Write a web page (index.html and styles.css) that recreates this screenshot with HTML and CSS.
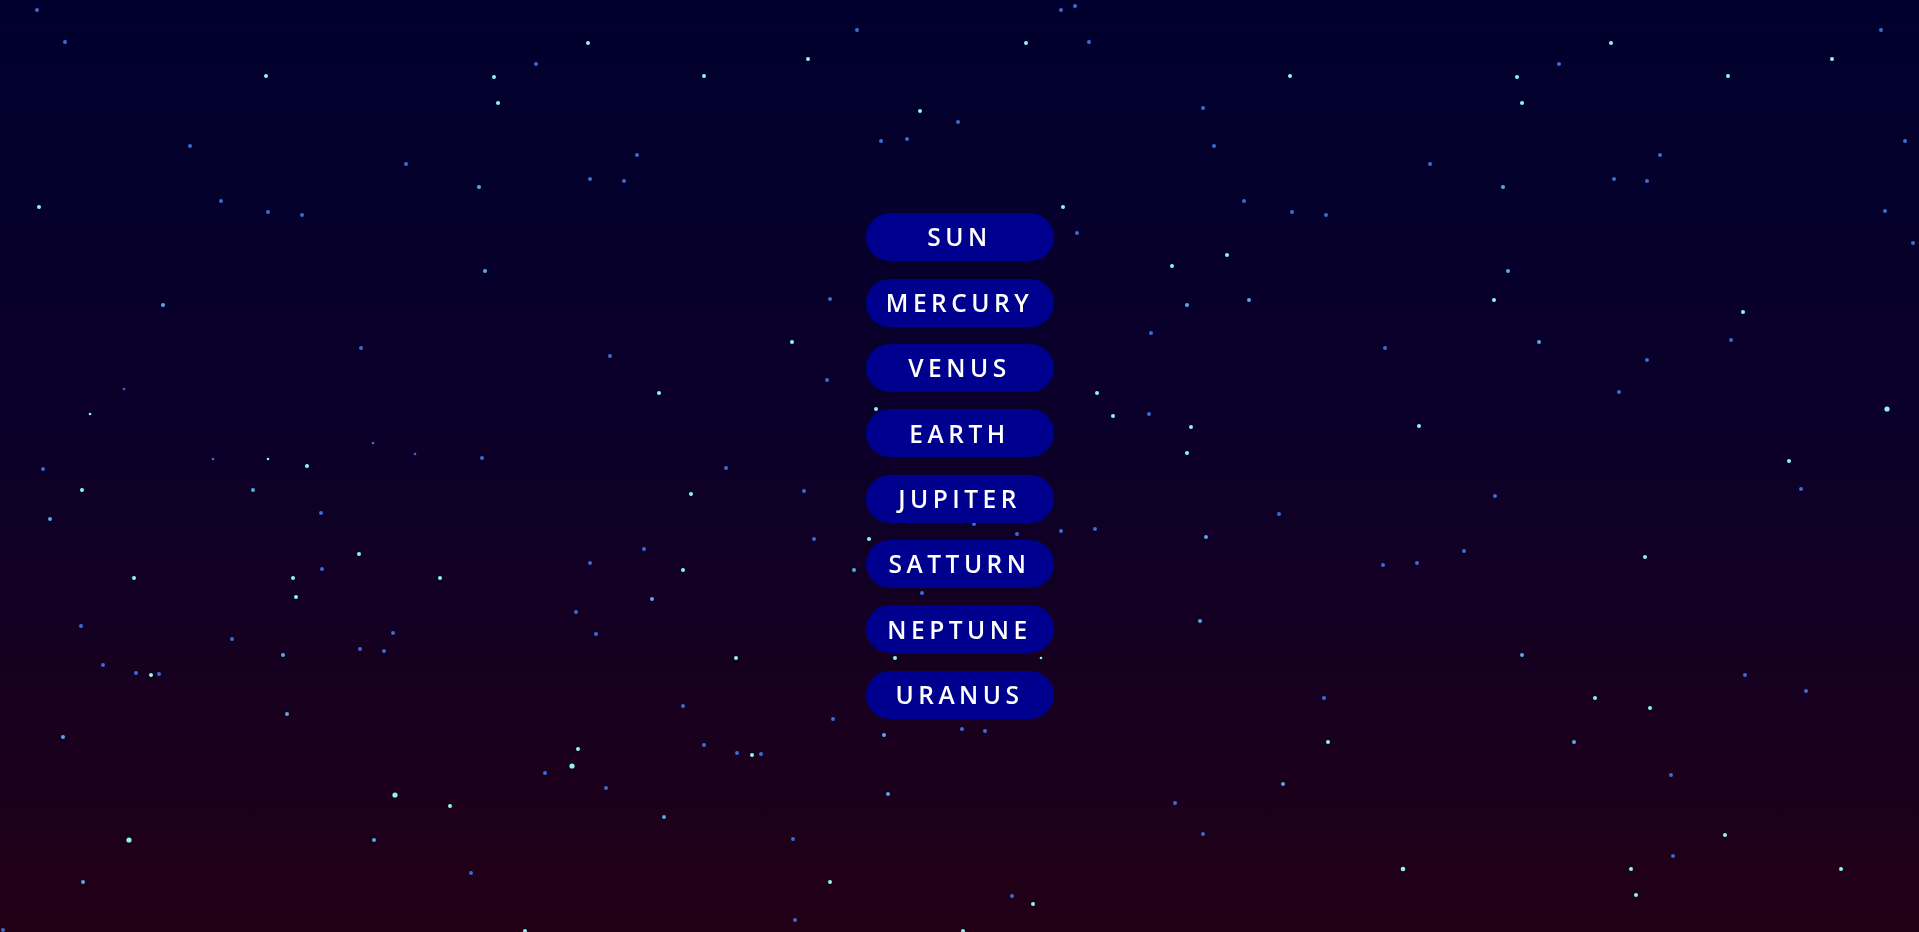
FILE: index.html
```html
<!DOCTYPE html>
<html lang="en">
<head>
<meta charset="utf-8">
<title>Solar System</title>
<link rel="stylesheet" href="styles.css">
</head>
<body>
<div class="sky" aria-hidden="true">
  <span class="stars stars-cyan"></span>
  <span class="stars stars-cyan-big"></span>
  <span class="stars stars-cyan-small"></span>
  <span class="stars stars-light"></span>
  <span class="stars stars-blue"></span>
  <span class="stars stars-blue-small"></span>
</div>
<nav class="menu">
  <a class="planet" href="#">SUN</a>
  <a class="planet" href="#">MERCURY</a>
  <a class="planet" href="#">VENUS</a>
  <a class="planet" href="#">EARTH</a>
  <a class="planet" href="#">JUPITER</a>
  <a class="planet" href="#">SATTURN</a>
  <a class="planet" href="#">NEPTUNE</a>
  <a class="planet" href="#">URANUS</a>
</nav>
</body>
</html>
```
FILE: styles.css
```css
html, body {
  margin: 0;
  padding: 0;
  height: 100%;
}

body {
  min-height: 100vh;
  overflow: hidden;
  background: linear-gradient(to bottom, #00002e 0%, #0b002a 45%, #220016 100%);
  font-family: "Open Sans", "Noto Sans", "DejaVu Sans", sans-serif;
  display: flex;
  align-items: center;
  justify-content: center;
}

.sky {
  position: fixed;
  inset: 0;
  pointer-events: none;
}

.stars {
  position: absolute;
  left: -0.5px;
  top: -0.5px;
  width: 4px;
  height: 4px;
  border-radius: 50%;
}

.stars-cyan {
  box-shadow:
    264px 74px #8cf6ee, 492px 75px #8cf6ee, 496px 101px #8cf6ee, 37px 205px #8cf6ee,
    305px 464px #8cf6ee, 80px 488px #8cf6ee, 357px 552px #8cf6ee, 132px 576px #8cf6ee,
    291px 576px #8cf6ee, 438px 576px #8cf6ee, 294px 595px #8cf6ee, 149px 673px #8cf6ee,
    448px 804px #8cf6ee, 586px 41px #8cf6ee, 702px 74px #8cf6ee, 806px 57px #8cf6ee,
    918px 109px #8cf6ee, 790px 340px #8cf6ee, 657px 391px #8cf6ee, 874px 407px #8cf6ee,
    689px 492px #8cf6ee, 867px 537px #8cf6ee, 681px 568px #8cf6ee, 734px 656px #8cf6ee,
    893px 656px #8cf6ee, 576px 747px #8cf6ee, 750px 753px #8cf6ee, 828px 880px #8cf6ee,
    523px 929px #8cf6ee, 961px 929px #8cf6ee,
    1024px 41px #8cf6ee, 1288px 74px #8cf6ee, 1061px 205px #8cf6ee, 1225px 253px #8cf6ee,
    1170px 264px #8cf6ee, 1095px 391px #8cf6ee, 1111px 414px #8cf6ee, 1189px 425px #8cf6ee,
    1417px 424px #8cf6ee, 1185px 451px #8cf6ee, 1609px 41px #8cf6ee, 1515px 75px #8cf6ee,
    1520px 101px #8cf6ee, 1726px 74px #8cf6ee, 1830px 57px #8cf6ee, 1492px 298px #8cf6ee,
    1741px 310px #8cf6ee, 1787px 459px #8cf6ee, 1326px 740px #8cf6ee,
    1031px 902px #8cf6ee, 1643px 555px #8cf6ee, 1593px 696px #8cf6ee, 1648px 706px #8cf6ee,
    1723px 833px #8cf6ee, 1629px 867px #8cf6ee, 1839px 867px #8cf6ee, 1634px 893px #8cf6ee;
}

.stars-cyan-big {
  box-shadow:
    393px 793px 0 0.6px #8cf6ee, 127px 838px 0 0.6px #8cf6ee, 570px 764px 0 0.6px #8cf6ee,
    1885px 407px 0 0.6px #8cf6ee, 1401px 867px 0 0.3px #8cf6ee;
}

.stars-cyan-small {
  box-shadow:
    88px 412px 0 -0.7px #8cf6ee, 266px 457px 0 -0.7px #8cf6ee, 1039px 656px 0 -0.7px #8cf6ee;
}

.stars-light {
  box-shadow:
    477px 185px #57a8e6, 483px 269px #57a8e6, 161px 303px #57a8e6, 251px 488px #57a8e6,
    48px 517px #57a8e6, 281px 653px #57a8e6, 285px 712px #57a8e6, 61px 735px #57a8e6,
    372px 838px #57a8e6, 81px 880px #57a8e6, 852px 568px #57a8e6, 650px 597px #57a8e6,
    882px 733px #57a8e6, 886px 792px #57a8e6, 662px 815px #57a8e6,
    1185px 303px #57a8e6, 1247px 298px #57a8e6, 1501px 185px #57a8e6, 1506px 269px #57a8e6,
    1537px 340px #57a8e6, 1204px 535px #57a8e6, 1198px 619px #57a8e6, 1281px 782px #57a8e6,
    1520px 653px #57a8e6, 1572px 740px #57a8e6;
}

.stars-blue {
  box-shadow:
    35px 8px #3d6bd2, 63px 40px #3d6bd2, 188px 144px #3d6bd2, 404px 162px #3d6bd2,
    219px 199px #3d6bd2, 266px 210px #3d6bd2, 300px 213px #3d6bd2, 359px 346px #3d6bd2,
    480px 456px #3d6bd2, 41px 467px #3d6bd2, 319px 511px #3d6bd2, 320px 567px #3d6bd2,
    79px 624px #3d6bd2, 391px 631px #3d6bd2, 230px 637px #3d6bd2, 358px 647px #3d6bd2,
    382px 649px #3d6bd2, 101px 663px #3d6bd2, 134px 671px #3d6bd2, 157px 672px #3d6bd2,
    469px 871px #3d6bd2, 1px 928px #3d6bd2, 534px 62px #3d6bd2, 855px 28px #3d6bd2,
    956px 120px #3d6bd2, 879px 139px #3d6bd2, 905px 137px #3d6bd2, 635px 153px #3d6bd2,
    588px 177px #3d6bd2, 622px 179px #3d6bd2, 828px 297px #3d6bd2, 608px 354px #3d6bd2,
    825px 378px #3d6bd2, 724px 466px #3d6bd2, 802px 489px #3d6bd2, 812px 537px #3d6bd2,
    642px 547px #3d6bd2, 588px 561px #3d6bd2, 920px 591px #3d6bd2, 1015px 532px #3d6bd2,
    972px 522px #3d6bd2, 574px 610px #3d6bd2, 594px 632px #3d6bd2, 681px 704px #3d6bd2,
    831px 717px #3d6bd2, 960px 727px #3d6bd2, 983px 729px #3d6bd2, 702px 743px #3d6bd2,
    735px 751px #3d6bd2, 759px 752px #3d6bd2, 543px 771px #3d6bd2, 604px 786px #3d6bd2,
    791px 837px #3d6bd2, 1010px 894px #3d6bd2, 793px 918px #3d6bd2,
    1059px 8px #3d6bd2, 1073px 4px #3d6bd2, 1087px 40px #3d6bd2, 1201px 106px #3d6bd2,
    1212px 144px #3d6bd2, 1428px 162px #3d6bd2, 1075px 231px #3d6bd2, 1242px 199px #3d6bd2,
    1290px 210px #3d6bd2, 1324px 213px #3d6bd2, 1149px 331px #3d6bd2, 1383px 346px #3d6bd2,
    1147px 412px #3d6bd2, 1879px 28px #3d6bd2, 1557px 62px #3d6bd2, 1903px 139px #3d6bd2,
    1658px 153px #3d6bd2, 1612px 177px #3d6bd2, 1645px 179px #3d6bd2, 1883px 209px #3d6bd2,
    1911px 241px #3d6bd2, 1729px 338px #3d6bd2, 1645px 358px #3d6bd2, 1617px 390px #3d6bd2,
    1059px 529px #3d6bd2, 1093px 527px #3d6bd2, 1277px 512px #3d6bd2, 1381px 563px #3d6bd2,
    1415px 561px #3d6bd2, 1462px 549px #3d6bd2, 1322px 696px #3d6bd2, 1173px 801px #3d6bd2,
    1201px 832px #3d6bd2, 1493px 494px #3d6bd2, 1799px 487px #3d6bd2, 1743px 673px #3d6bd2,
    1804px 689px #3d6bd2, 1669px 773px #3d6bd2, 1671px 854px #3d6bd2;
}

.stars-blue-small {
  box-shadow:
    122px 387px 0 -0.7px #3d6bd2, 371px 441px 0 -0.7px #3d6bd2, 413px 452px 0 -0.7px #3d6bd2,
    211px 457px 0 -0.7px #3d6bd2;
}

.menu {
  position: relative;
  display: flex;
  flex-direction: column;
  align-items: center;
  gap: 17.4px;
}

.planet {
  display: flex;
  align-items: center;
  justify-content: center;
  width: 188px;
  height: 48px;
  border-radius: 24px;
  background: #00008e;
  color: #ffffff;
  text-decoration: none;
  font-family: "Open Sans", "Noto Sans", sans-serif;
  font-weight: 650;
  font-size: 24.5px;
  letter-spacing: 4.5px;
  line-height: 1;
  padding-top: 1px;
  box-sizing: border-box;
}
```
